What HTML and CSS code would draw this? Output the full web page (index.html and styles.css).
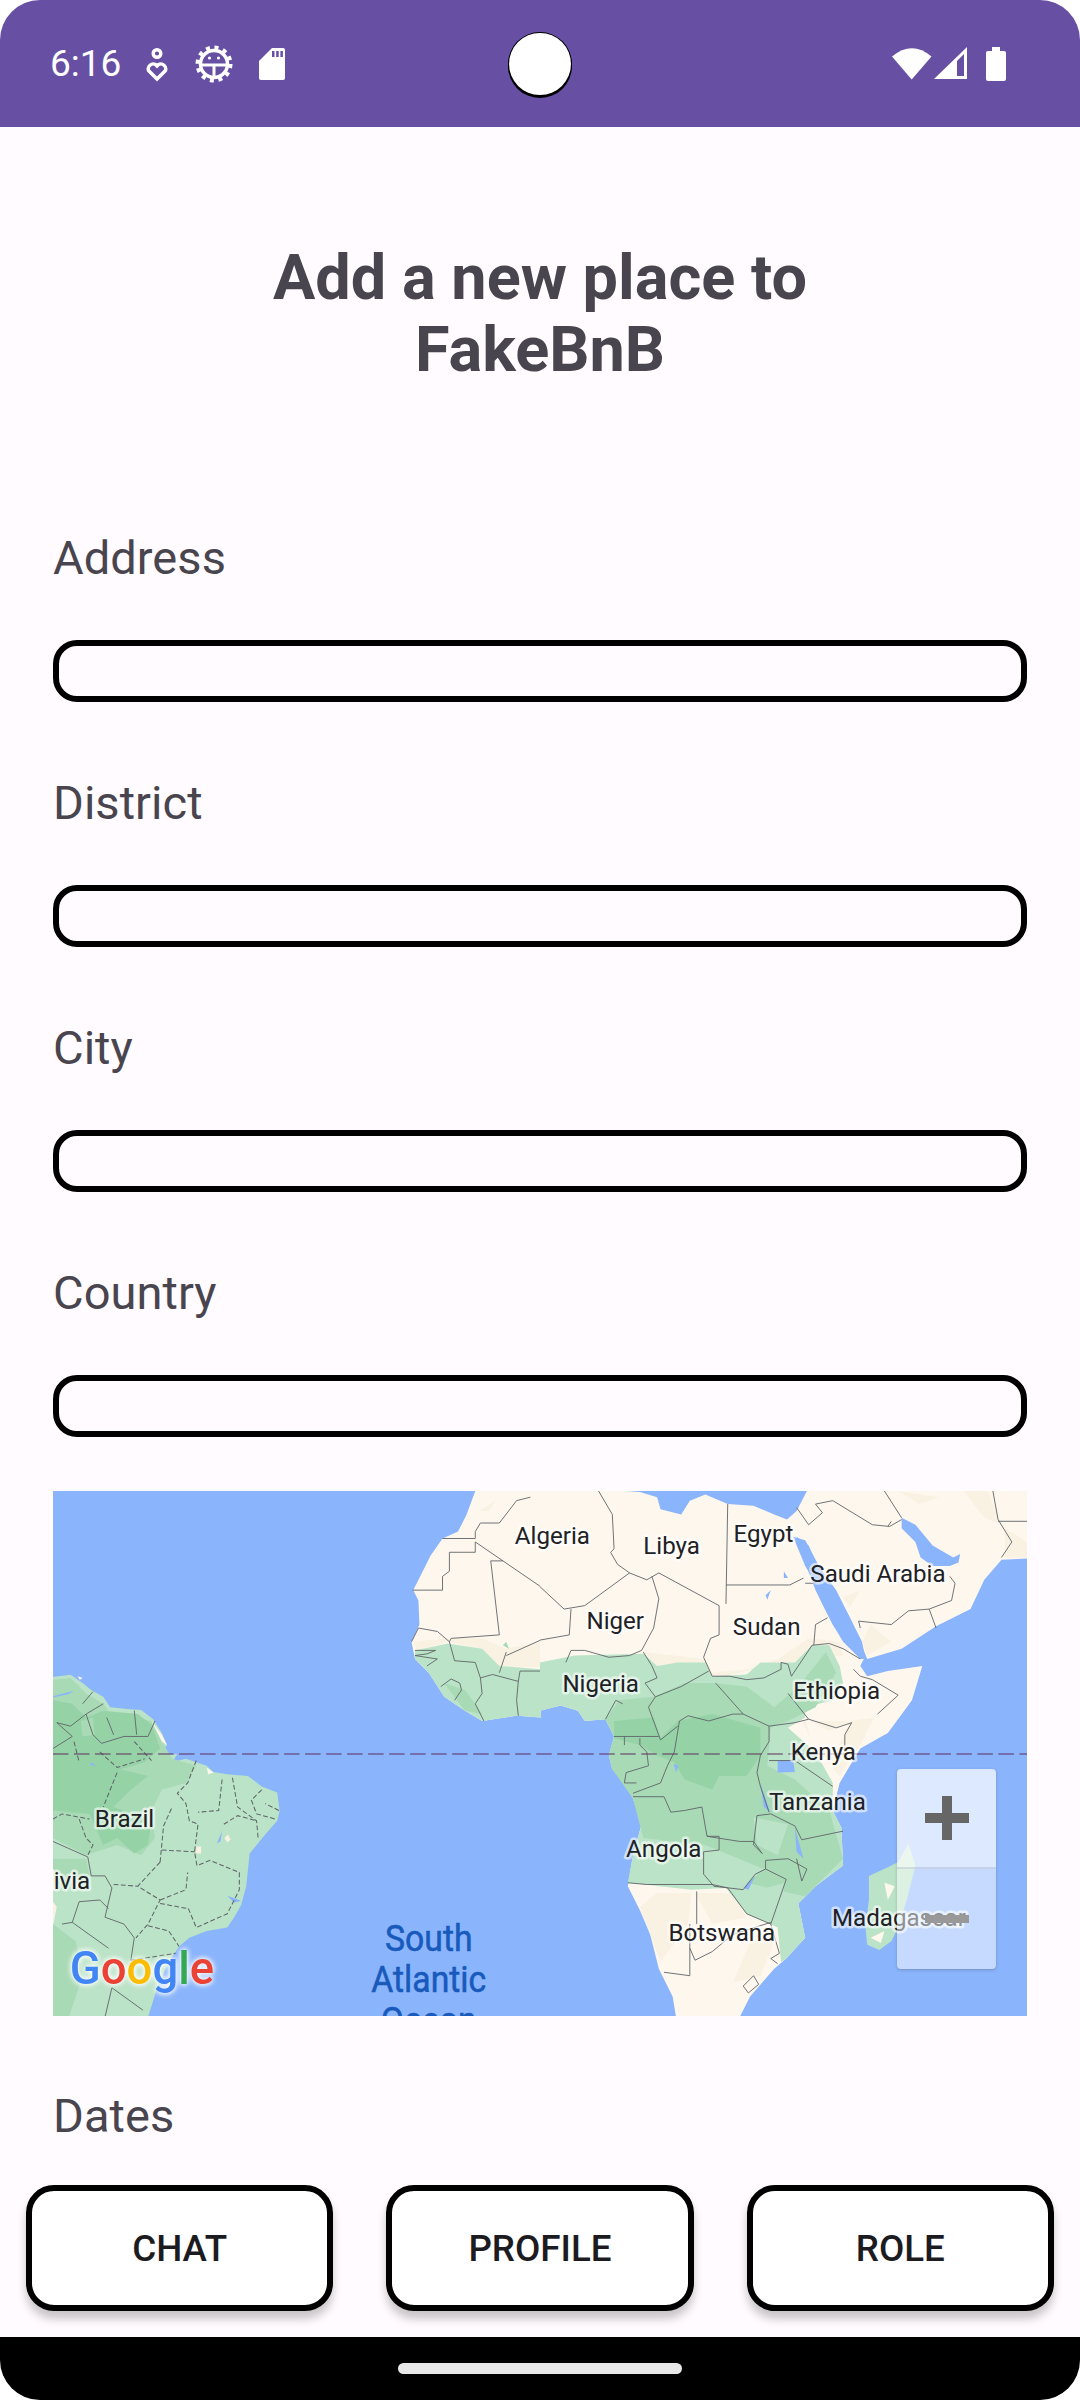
FILE: index.html
```html
<!DOCTYPE html>
<html lang="en">
<head>
<meta charset="utf-8">
<title>Add a new place to FakeBnB</title>
<link rel="stylesheet" href="styles.css">
</head>
<body>
<div class="phone">
  <header class="status-bar">
    <div class="status-left">
      <span class="clock">6:16</span>
      <svg class="ic ic-heart" viewBox="0 0 22 34"><circle cx="11" cy="5.5" r="3.8" /><path d="M11 31 L2.5 22.5 A5 5 0 0 1 9.5 16.5 L11 18 L12.5 16.5 A5 5 0 0 1 19.5 22.5 Z" /></svg>
      <svg class="ic ic-gear" viewBox="0 0 38 38"><circle class="gear-teeth" cx="19" cy="19" r="16.5" /><circle class="gear-ring" cx="19" cy="19" r="13.5" /><path class="gear-lines" d="M6 20 H32 M19 20 V32" /><circle class="gear-eye" cx="14.5" cy="13" r="1.6" /><circle class="gear-eye" cx="23.5" cy="13" r="1.6" /></svg>
      <svg class="ic ic-sd" viewBox="0 0 26 32"><path class="fill-w" d="M13 0 H24 Q26 0 26 2 V30 Q26 32 24 32 H2 Q0 32 0 30 V13 Z" /><path class="fill-p" d="M13 3 H15.5 V9 H13 Z M17.2 3 H19.7 V9 H17.2 Z M21.4 3 H23.9 V9 H21.4 Z" /></svg>
    </div>
    <div class="status-right">
      <svg class="ic ic-wifi" viewBox="0 0 40 33"><path class="fill-w" d="M0 9.5 Q20 -7 39.5 9.5 L19.7 32.5 Z" /></svg>
      <svg class="ic ic-signal" viewBox="0 0 33 32"><path class="fill-w" d="M0 32 L33 0 V32 Z" /><path class="fill-p" d="M23 14 L30 7 V29 H23 Z" /></svg>
      <svg class="ic ic-batt" viewBox="0 0 20 34"><path class="fill-w" d="M6 0 H14 V4 H18 Q20 4 20 6 V32 Q20 34 18 34 H2 Q0 34 0 32 V6 Q0 4 2 4 H6 Z" /></svg>
    </div>
    <div class="camera"></div>
  </header>

  <main class="content">
    <h1 class="title">Add a new place to<br>FakeBnB</h1>
    <div class="fields">
      <div class="field"><label class="label">Address</label><div class="input"></div></div>
      <div class="field"><label class="label">District</label><div class="input"></div></div>
      <div class="field"><label class="label">City</label><div class="input"></div></div>
      <div class="field"><label class="label">Country</label><div class="input"></div></div>
    </div>

    <div class="map">
      <svg class="map-svg" viewBox="154 32 2828 1525" preserveAspectRatio="none">
        <rect class="sea" x="154" y="32" width="2828" height="1525" />

        <!-- South America -->
        <path class="g1" d="M154 572 L205 566 L240 590 L265 610 L300 630 L320 660 L370 665 L410 668 L445 695 L470 735 L485 770 L465 797 L515 797 L500 820 L540 810 L600 830 L620 848 L660 855 L720 860 L760 890 L805 908 L812 960 L805 990 L770 1030 L725 1085 L715 1180 L700 1235 L680 1270 L660 1300 L600 1310 L550 1330 L520 1355 L490 1400 L455 1480 L430 1560 L154 1560 Z" />
        <path class="g2" d="M154 580 L205 575 L250 620 L300 650 L320 680 L440 700 L470 760 L500 810 L570 830 L540 880 L470 900 L440 960 L450 1040 L410 1090 L340 1060 L280 1080 L250 1090 L154 1040 Z" />
        <path class="g3" d="M154 640 L210 650 L250 690 L300 670 L400 680 L440 710 L465 780 L420 820 L350 840 L430 860 L380 900 L330 950 L440 990 L430 1060 L390 1085 L340 1040 L300 1060 L260 970 L154 960 Z" />
        <path class="g2" d="M235 700 L270 690 L275 740 L240 745 Z M154 1100 L250 1100 L260 1150 L200 1180 L154 1170 Z" />
        <path class="sea" d="M154 628 L215 612 L200 622 L154 632 Z M265 820 L280 830 L262 828 Z M630 1055 L645 1020 L640 1050 Z M660 1208 L700 1222 L680 1228 Z" />
        <path class="sand" d="M150 1220 L165 1240 L155 1290 L150 1290 Z M652 1040 L662 1030 L670 1045 L660 1052 Z M570 1065 L584 1065 L584 1085 L570 1085 Z" />
        <path class="land" d="M225 570 L240 575 L232 580 Z M440 700 L470 740 L485 770 L470 760 Z M600 835 L620 850 L605 855 Z" />
        <path class="g2" d="M154 1290 L220 1340 L240 1440 L200 1560 L154 1560 Z" />
        <path class="border" d="M154 780 L210 745 L165 705 L205 715 L250 680 L300 650 M250 680 L270 740 L295 765 L360 745 L430 745 L450 700 M390 670 L397 740 M310 690 L330 740 M240 650 L270 615 M154 1050 L255 1095 L265 1150 L305 1150 L325 1185 L305 1270 L360 1290 L390 1330 L380 1395 M210 1285 L230 1225 L290 1220 L315 1245 M180 1290 L210 1285 L315 1360 M305 1560 L325 1475 L415 1540" />
        <path class="border-d" d="M215 760 L230 820 M340 850 L300 950 M154 985 L180 970 L260 985 M230 985 L250 1040 L270 1060 L255 1090 M570 815 L545 880 L515 910 L540 940 L550 990 L575 1000 L565 1080 L572 1120 L610 1105 L695 1140 L695 1190 L660 1260 L570 1300 L545 1240 M465 1110 L475 1005 L500 950 M470 1075 L565 1080 M465 1110 L400 1180 L465 1220 L430 1290 L395 1330 M330 1175 L400 1180 M465 1220 L540 1190 L545 1140 M465 1230 L545 1245 M430 1295 L490 1310 L520 1355 M645 870 L635 960 L575 965 M675 865 L690 950 L745 990 L750 1045 M650 1000 L690 975 L745 990 M760 900 L730 930 L745 970 L800 985 M810 960 L770 940 M290 790 L340 835 L420 810 M390 760 L440 815 M380 1395 L510 1375" />

        <!-- Africa, west side -->
        <path class="land" d="M1380 32 L1355 100 L1330 150 L1285 170 L1250 220 L1200 320 L1215 350 L1218 420 L1195 470 L1205 520 L1245 560 L1290 630 L1350 670 L1400 700 L1500 685 L1570 690 L1570 32 Z" />
        <path class="sand" d="M1200 470 L1300 460 L1400 460 L1470 490 L1570 470 L1570 545 L1450 540 L1400 490 L1300 470 L1210 495 Z M1390 90 L1440 60 L1420 90 Z" />
        <path class="g1" d="M1205 495 L1300 475 L1400 490 L1450 540 L1570 550 L1570 690 L1500 685 L1400 700 L1350 670 L1290 630 L1245 560 L1205 520 Z" />
        <path class="g2" d="M1350 670 L1290 590 L1350 610 L1400 680 Z M1470 470 L1478 490 L1460 480 Z" />
        <path class="border" d="M1285 170 H1380 V150 L1395 125 L1450 125 L1500 60 L1540 50 M1380 180 L1570 310 M1198 320 H1285 V280 L1305 265 V210 H1380 V180 M1425 235 H1460 M1425 235 L1450 450 L1310 460 L1305 470 L1270 440 L1215 430 L1195 470 M1305 470 L1320 525 L1380 530 L1395 575 L1430 565 L1505 585 L1510 555 L1570 555 M1205 495 H1265 L1240 505 L1205 510 L1270 520 M1240 540 L1270 520 M1280 600 L1310 578 L1335 590 L1340 610 L1320 640 M1395 575 L1400 620 L1380 650 L1405 700 M1505 585 L1500 640 L1505 685 M1470 500 L1450 560 M1470 510 L1570 465" />

        <g transform="translate(1568 0)">
          <!-- Eurasia and Africa -->
          <path class="land" d="M775 32 L1414 32 L1414 228 L1340 232 L1290 290 L1250 375 L1150 425 L1050 490 L950 520 L930 470 L900 400 L850 310 L810 260 L780 190 L745 165 L700 130 L745 90 Z" />
          <path class="land" d="M0 32 L250 32 L290 35 L340 50 L350 85 L410 100 L435 60 L480 42 L545 70 L620 75 L680 100 L730 120 L770 240 L800 320 L850 420 L880 460 L940 520 L930 540 L950 570 L1010 555 L1110 540 L1080 640 L1010 735 L930 780 L870 880 L850 960 L875 1010 L880 1120 L800 1180 L750 1230 L770 1330 L715 1390 L680 1420 L610 1500 L580 1560 L395 1560 L385 1500 L345 1420 L320 1320 L290 1250 L255 1180 L270 1090 L295 1000 L270 925 L245 880 L210 840 L200 800 L215 745 L190 695 L130 700 L110 670 L60 655 L0 670 Z" />
          <path class="sea" d="M735 165 L770 175 L810 250 L860 320 L900 400 L935 470 L945 520 L930 520 L880 470 L850 420 L815 350 L800 300 L770 250 Z M1050 110 L1090 130 L1140 190 L1200 225 L1220 215 L1215 240 L1190 250 L1140 250 L1105 225 L1090 180 L1050 140 Z M708 265 L720 285 L708 285 Z M670 320 L660 348 L655 335 Z" />
          <path class="sand" d="M960 420 L1020 470 L950 510 L935 470 Z M1230 32 L1300 32 L1340 130 L1290 110 Z M1350 140 L1414 180 L1414 225 L1350 225 Z M1040 32 L1160 50 L1100 70 Z M300 500 L480 520 L500 560 L600 550 L690 520 L780 460 L870 470 L880 510 L790 520 L740 620 L660 540 L500 580 L330 540 Z M760 700 L900 700 L970 690 L930 770 L870 860 L800 780 Z M290 1240 L340 1200 L440 1200 L430 1290 L350 1400 Z M450 1200 L560 1200 L600 1270 L500 1290 Z M620 1320 L680 1340 L640 1440 L560 1460 Z M880 340 L930 320 L900 370 Z" />
          <path class="g1" d="M0 530 L50 520 L100 510 L300 505 L340 540 L400 530 L480 530 L500 570 L600 565 L640 530 L700 530 L740 530 L790 480 L840 480 L870 540 L880 590 L850 640 L770 660 L770 690 L720 720 L800 790 L850 880 L850 960 L875 1010 L880 1120 L800 1180 L750 1230 L770 1330 L715 1390 L700 1400 L690 1300 L600 1260 L540 1185 L440 1190 L255 1170 L270 1090 L295 1000 L270 925 L245 880 L210 840 L200 800 L215 745 L190 695 L130 700 L110 670 L60 655 L0 670 Z" />
          <path class="g2" d="M190 695 L230 640 L330 630 L420 590 L500 590 L600 600 L680 660 L750 600 L830 500 L860 560 L800 660 L720 700 L670 720 L660 830 L740 870 L840 960 L880 1100 L770 1210 L600 1170 L650 1130 L480 1060 L300 1040 L270 925 L210 840 L200 800 L215 745 Z" />
          <path class="g3" d="M215 700 L330 690 L350 750 L400 700 L500 680 L640 720 L640 800 L600 860 L520 860 L500 900 L420 870 L390 820 L340 800 L290 770 L215 750 Z" />
          <path class="g1" d="M475 1080 L560 1110 L590 1180 L480 1140 Z M620 980 L720 1000 L690 1090 L630 1060 Z M640 1190 L710 1170 L700 1270 L630 1260 Z" />
          <path class="sea" d="M690 815 L735 815 L740 848 L690 850 Z M640 880 L668 965 L650 950 Z M740 1010 L765 1100 L745 1080 Z M590 1185 L625 1150 L605 1190 Z M388 825 L402 830 L395 850 Z" />
          <path class="land" d="M770 690 L840 730 L900 700 L880 750 L850 800 L790 770 Z" />

          <path class="border" d="M170 32 L210 100 L215 200 L205 210 L225 245 L260 270 M0 310 L70 375 L130 365 L260 270 L310 290 L345 270 L520 365 V450 L495 460 L475 515 L500 570 M325 280 L345 345 L330 430 L295 495 M90 375 L85 450 L0 465 M295 495 L260 510 L200 515 L130 495 L90 495 L75 530 M545 70 L540 360 M540 305 H725 L765 285 M500 570 L550 570 L600 580 L650 575 L700 550 L700 530 L720 535 L730 570 L790 480 L840 475 L880 490 L930 520 M800 420 L795 480 M835 400 L800 420 M910 550 L930 570 L965 580 L1040 625 L980 680 M720 620 L780 695 L860 720 L905 705 L885 740 V790 M510 590 L590 680 L665 715 L740 705 L780 695 M405 700 L430 685 L490 700 L560 680 L590 680 M300 500 L325 540 L340 575 L305 590 L335 630 L315 660 L350 755 M335 630 L410 600 L490 555 M190 695 L220 640 L240 650 M215 745 H345 M405 700 L390 790 L370 830 L350 880 L270 910 M350 755 L400 715 M245 770 V745 M290 750 V770 L310 790 L315 830 L250 850 L245 880 L280 880 M270 920 H360 L380 965 L420 960 L470 950 L485 1035 H520 V1075 L475 1080 V1145 L505 1180 L590 1190 L625 1145 L655 1130 V1105 L720 1100 M485 1035 L580 1050 L620 1050 L645 1085 L620 1060 L630 975 L670 970 L740 1005 L760 1045 L880 1020 M665 815 H740 L850 890 M665 715 V760 L640 800 L630 850 L640 890 L665 965 M255 1170 L310 1175 H500 L545 1185 L600 1260 L670 1290 L715 1160 L655 1130 M455 1195 V1290 M435 1290 V1440 L360 1430 M435 1360 L450 1395 L500 1370 L560 1320 L670 1285 M670 1290 L695 1375 L670 1390 L690 1405 M590 1470 L620 1440 L635 1465 L605 1490 Z M745 80 L780 130 L820 95 L800 70 L850 60 L965 130 L1015 135 L1050 115 M1020 120 L1010 135 M1000 32 L1050 110 M930 430 L925 410 L1020 420 L1070 380 L1130 375 L1195 350 L1205 300 L1190 280 M1130 375 L1150 430 M1315 32 L1330 115 L1370 180 L1340 225 M1330 120 L1414 120 M720 1100 L775 1130 L760 1165 L745 1100 M770 300 H800" />

          <!-- Madagascar -->
          <path class="g1" d="M1070 1055 L1090 1120 L1065 1220 L1040 1300 L1020 1340 L985 1365 L950 1350 L945 1300 L955 1220 L955 1150 L1010 1125 L1040 1110 Z" />
          <path class="land" d="M1000 1170 L1030 1180 L1010 1220 Z M960 1330 L1000 1310 L990 1345 Z" />
        </g>

        <line class="equator" x1="154" y1="796" x2="2982" y2="796" />

        <g class="labels">
          <text class="lab" x="275" y="1007">Brazil</text>
          <text class="lab lab-end" x="262" y="1188">Bolivia</text>
          <text class="lab" x="1495" y="185">Algeria</text>
          <text class="lab" x="1868" y="215">Libya</text>
          <text class="lab" x="2130" y="180">Egypt</text>
          <text class="lab" x="2353" y="295">Saudi Arabia</text>
          <text class="lab" x="1703" y="432">Niger</text>
          <text class="lab" x="2128" y="450">Sudan</text>
          <text class="lab" x="1633" y="615">Nigeria</text>
          <text class="lab" x="2303" y="635">Ethiopia</text>
          <text class="lab" x="2296" y="812">Kenya</text>
          <text class="lab" x="2233" y="960">Tanzania</text>
          <text class="lab" x="1818" y="1095">Angola</text>
          <text class="lab" x="1941" y="1340">Botswana</text>
          <text class="lab" x="2416" y="1295">Madagascar</text>
          <text class="ocean" x="1245" y="1370">South</text>
          <text class="ocean" x="1245" y="1490">Atlantic</text>
          <text class="ocean" x="1245" y="1610">Ocean</text>
        </g>
        <text class="google" x="203" y="1465"><tspan class="c-b">G</tspan><tspan class="c-r">o</tspan><tspan class="c-y">o</tspan><tspan class="c-b">g</tspan><tspan class="c-g">l</tspan><tspan class="c-r">e</tspan></text>
      </svg>
      <div class="zoom-ctl">
        <div class="zoom-btn zoom-in"><svg class="zoom-ic" viewBox="0 0 44 44"><path class="plus" d="M17 0 H27 V17 H44 V27 H27 V44 H17 V27 H0 V17 H17 Z" /></svg></div>
        <div class="zoom-btn zoom-out"><svg class="zoom-ic" viewBox="0 0 44 44"><path class="minus" d="M0 18 H44 V26 H0 Z" /></svg></div>
      </div>
    </div>

    <div class="field dates"><label class="label">Dates</label></div>
  </main>

  <nav class="actions">
    <button class="action">CHAT</button>
    <button class="action">PROFILE</button>
    <button class="action">ROLE</button>
  </nav>

  <footer class="nav-bar"><span class="pill"></span></footer>
</div>
</body>
</html>
```

FILE: styles.css
```css
* { box-sizing: border-box; }
html, body { margin: 0; padding: 0; background: #fff; }
body { width: 1080px; height: 2400px; font-family: Roboto, "Noto Sans", sans-serif; }

.phone {
  position: relative;
  width: 1080px;
  height: 2400px;
  display: flex;
  flex-direction: column;
  overflow: hidden;
  border-radius: 40px;
  background: #FFFBFE;
}

/* status bar */
.status-bar {
  position: relative;
  flex: 0 0 127px;
  display: flex;
  justify-content: space-between;
  align-items: flex-start;
  background: #6750A4;
  color: #fff;
}
.status-left { display: flex; align-items: center; margin: 47px 0 0 50px; height: 34px; }
.status-right { display: flex; align-items: flex-start; margin: 47px 74px 0 0; }
.clock { font-size: 37px; line-height: 34px; width: 96px; }
.ic { display: block; fill: #fff; }
.ic-heart { width: 22px; height: 34px; fill: none; stroke: #fff; stroke-width: 3.4; margin-top: 2px; }
.ic-gear { width: 38px; height: 38px; margin-left: 27px; fill: none; }
.gear-teeth { fill: none; stroke: #fff; stroke-width: 4; stroke-dasharray: 4 4.64; }
.gear-ring { fill: none; stroke: #fff; stroke-width: 3.5; }
.gear-lines { fill: none; stroke: #fff; stroke-width: 3; }
.gear-eye { fill: #fff; }
.ic-sd { width: 26px; height: 32px; margin-left: 26px; }
.fill-w { fill: #fff; }
.fill-p { fill: #6750A4; }
.ic-wifi { width: 40px; height: 33px; }
.ic-signal { width: 33px; height: 32px; margin-left: 2px; }
.ic-batt { width: 20px; height: 34px; margin-left: 19px; }
.camera {
  position: absolute;
  left: 509px;
  top: 33px;
  width: 62px;
  height: 62px;
  border-radius: 50%;
  background: #fff;
  box-shadow: 0 0 0 1px #000, 0 2px 0 1px #000;
}

/* content */
.content { flex: 1 1 0; min-height: 0; overflow: hidden; padding: 115px 53px 0; }
.title {
  margin: 0 0 141px;
  text-align: center;
  font-size: 63px;
  line-height: 72px;
  font-weight: 700;
  color: #49454F;
}
.fields { display: flex; flex-direction: column; gap: 70px; }
.field { display: flex; flex-direction: column; gap: 51px; }
.label { font-size: 47px; line-height: 62px; color: #49454F; letter-spacing: .05px; }
.input { height: 62px; border: 6px solid #000; border-radius: 24px; }
.dates { margin-top: 69px; }

/* map */
.map { position: relative; height: 525px; margin-top: 54px; overflow: hidden; }
.map-svg { display: block; width: 100%; height: 100%; }
.sea { fill: #8AB4FC; }
.land { fill: #FEF7EE; }
.sand { fill: #F9F2E3; }
.g1 { fill: #BBE3C7; }
.g2 { fill: #A9DAB6; }
.g3 { fill: #95D3A7; }
.border { fill: none; stroke: #5F6368; stroke-width: 2.6; stroke-linejoin: round; }
.border-d { fill: none; stroke: #5F6368; stroke-width: 3; stroke-dasharray: 14 7; }
.equator { stroke: #5C2F5E; stroke-width: 3.2; stroke-dasharray: 45 16; }
.lab {
  font-size: 70px;
  fill: #202124;
  stroke: rgba(255, 255, 255, .62);
  stroke-width: 15px;
  stroke-linejoin: round;
  paint-order: stroke;
}
.lab-end { text-anchor: end; }
.ocean {
  font-size: 98px;
  fill: #185ABC;
  stroke: #185ABC;
  stroke-width: 1.5px;
  text-anchor: middle;
  transform-box: fill-box;
  transform-origin: 50% 100%;
  transform: scaleY(1.1);
}
.google {
  font-size: 132px;
  font-weight: 500;
  filter: drop-shadow(0 0 7px rgba(255, 255, 255, 1)) drop-shadow(0 0 8px rgba(255, 255, 255, .8));
}
.c-b { fill: #4285F4; }
.c-r { fill: #EA4335; }
.c-y { fill: #FBBC05; }
.c-g { fill: #34A853; }

.zoom-ctl {
  position: absolute;
  right: 31px;
  bottom: 47px;
  width: 99px;
  border-radius: 4px;
  overflow: hidden;
  box-shadow: 0 1px 3px rgba(60, 64, 67, .3);
}
.zoom-btn { height: 100px; display: flex; align-items: center; justify-content: center; }
.zoom-in { background: rgba(255, 255, 255, .7); border-bottom: 2px solid rgba(120, 140, 170, .25); }
.zoom-out { background: rgba(255, 255, 255, .5); }
.zoom-ic { display: block; width: 44px; height: 44px; }
.plus { fill: #666; }
.minus { fill: #999; }

/* bottom buttons */
.actions { flex: 0 0 auto; display: flex; gap: 53px; padding: 25px 26px 26px; }
.action {
  flex: 1 1 0;
  height: 126px;
  border: 6px solid #000;
  border-radius: 28px;
  background: #fff;
  color: #1C1B1F;
  font-family: Roboto, sans-serif;
  font-size: 36.75px;
  font-weight: 500;
  box-shadow: 0 8px 10px rgba(0, 0, 0, .22);
}

/* navigation bar */
.nav-bar { flex: 0 0 63px; display: flex; justify-content: center; align-items: flex-start; padding-top: 26px; background: #000; }
.pill { width: 284px; height: 11px; border-radius: 6px; background: #E8E8E8; }
```
